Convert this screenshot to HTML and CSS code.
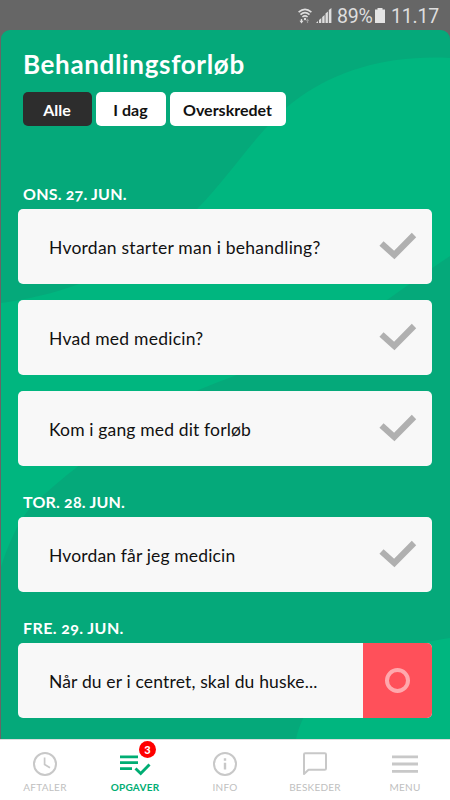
FILE: index.html
```html
<!DOCTYPE html>
<html lang="da">
<head>
    <meta charset="UTF-8">
    <meta name="viewport" content="width=device-width, initial-scale=1.0">
    <title>Behandlingsforløb</title>
    <link rel="stylesheet" href="styles.css">
</head>
<body>
    <!-- Phone status bar -->
    <div class="status-bar">
        <svg class="wifi" width="14" height="16" viewBox="0 0 14 16" fill="none" stroke="#dedede" stroke-width="1.6">
            <path d="M0.6 4.2Q7 -1.6 13.4 4.2M2.5 6.6Q7 2.6 11.5 6.6M4.4 9Q7 6.8 9.6 9"/>
            <circle cx="7" cy="11" r="1.2" fill="#dedede" stroke="none"/>
            <path d="M3.5 11v2.6" stroke-width="1.4"/>
            <path d="M1.5 12.7h4L3.5 15.6z" fill="#dedede" stroke="none"/>
            <path d="M9.5 15v-2.5" stroke="#999" stroke-width="1.2"/>
            <path d="M7.8 13h3.4L9.5 10.6z" fill="#999" stroke="none"/>
        </svg>
        <svg class="signal" width="16" height="16" viewBox="0 0 16 16" fill="#dedede">
            <path d="M0 15l2-2v2zM3 12l2.3-2v5H3zM6.2 9l2.4-2v8H6.2zM9.5 5.5l2.4-2V15H9.5zM12.8 2l2.6-2v15h-2.6z"/>
        </svg>
        <span class="percent">89%</span>
        <svg class="battery" width="10" height="15" viewBox="0 0 10 15" fill="#e4e4e4">
            <path d="M0 1.5h2.5V0h5v1.5H10V15H0z"/>
        </svg>
        <span class="clock">11.17</span>
    </div>

    <main class="app">
        <!-- Background waves -->
        <svg class="waves" width="449" height="709" viewBox="1 30 449 709" fill="#00b67f">
            <path d="M450 58C390 55 340 69 300 97C262 123 232 174 198 208C160 249 90 292 0 303V570C7 548 16 525 30 508C60 478 100 449 143 419C190 386 260 371 320 341C370 315 412 281 450 256Z"/>
            <path d="M450 638C405 645 377 656 350 672C322 687 303 709 296 739H450Z"/>
        </svg>

        <h1>Behandlingsforløb</h1>
        <div class="filters">
            <button class="filter all active">Alle</button>
            <button class="filter today">I dag</button>
            <button class="filter overdue">Overskredet</button>
        </div>

        <section class="day">
            <h2>ONS. 27. JUN.</h2>
            <div class="task">
                <span class="wide">Hvordan starter man i behandling?</span>
                <svg class="check" width="38" height="28" viewBox="0 0 38 28" fill="none" stroke="#b0b0b0" stroke-width="6.2"><path d="M2.5 11.5L15.3 23L35 3"/></svg>
            </div>
            <div class="task">
                <span class="wide">Hvad med medicin?</span>
                <svg class="check" width="38" height="28" viewBox="0 0 38 28" fill="none" stroke="#b0b0b0" stroke-width="6.2"><path d="M2.5 11.5L15.3 23L35 3"/></svg>
            </div>
            <div class="task">
                <span>Kom i gang med dit forløb</span>
                <svg class="check" width="38" height="28" viewBox="0 0 38 28" fill="none" stroke="#b0b0b0" stroke-width="6.2"><path d="M2.5 11.5L15.3 23L35 3"/></svg>
            </div>
        </section>

        <section class="day">
            <h2>TOR. 28. JUN.</h2>
            <div class="task">
                <span>Hvordan får jeg medicin</span>
                <svg class="check" width="38" height="28" viewBox="0 0 38 28" fill="none" stroke="#b0b0b0" stroke-width="6.2"><path d="M2.5 11.5L15.3 23L35 3"/></svg>
            </div>
        </section>

        <section class="day">
            <h2 class="wide">FRE. 29. JUN.</h2>
            <div class="task open">
                <span>Når du er i centret, skal du huske...</span>
                <div class="missing"><div class="ring"></div></div>
            </div>
        </section>
    </main>

    <!-- Bottom navigation -->
    <nav class="tabs">
        <a class="tab">
            <svg width="26" height="26" viewBox="0 0 26 26" fill="none" stroke="#c8c8c8" stroke-width="2"><circle cx="13" cy="13" r="11"/><path d="M12.6 6.5V13.5L18 16.8" stroke-width="1.7"/></svg>
            <span>AFTALER</span>
        </a>
        <a class="tab selected">
            <svg width="32" height="26" viewBox="0 0 32 26" fill="none" stroke="#00ad73"><path d="M1 5.8h18M1 11.7h18M1 17.6h12" stroke-width="2.7"/><path d="M16.5 17.5L21.7 22.5L30.5 13.5" stroke-width="2.9"/></svg>
            <span>OPGAVER</span>
            <b class="badge">3</b>
        </a>
        <a class="tab">
            <svg width="26" height="26" viewBox="0 0 26 26" fill="none" stroke="#c8c8c8" stroke-width="2"><circle cx="13" cy="13" r="11"/><path d="M13 11.8V18.5M13 7.2V9.7" stroke-width="2.4"/></svg>
            <span>INFO</span>
        </a>
        <a class="tab">
            <svg width="26" height="26" viewBox="0 0 26 26" fill="none" stroke="#c8c8c8" stroke-width="2" stroke-linejoin="round"><path d="M2 23V3.5Q2 2.3 3.2 2.3H22.8Q24 2.3 24 3.5V17.5Q24 18.7 22.8 18.7H6.5Z"/></svg>
            <span>BESKEDER</span>
        </a>
        <a class="tab">
            <svg width="26" height="26" viewBox="0 0 26 26" fill="none" stroke="#c8c8c8" stroke-width="2.8"><path d="M0 5.8h26M0 13h26M0 20.4h26"/></svg>
            <span>MENU</span>
        </a>
    </nav>
</body>
</html>
```
FILE: styles.css
```css
* {
    box-sizing: border-box;
}

body {
    width: 450px;
    height: 800px;
    margin: 0;
    overflow: hidden;
    background-color: #666;
    font-family: Lato, "Noto Sans", sans-serif;
}

.status-bar {
    display: flex;
    height: 30px;
    padding: 8px 12px 0 0;
    justify-content: flex-end;
    align-items: flex-start;
    color: #dedede;
    font: 19.5px/17px Roboto, sans-serif;
    letter-spacing: -0.2px;
    white-space: nowrap;
}

.wifi {
    margin-right: 4px;
}

.signal {
    margin-right: 5px;
}

.percent {
    width: 38px;
}

.battery {
    margin-right: 6px;
}

.clock {
    width: 47px;
}

.app {
    position: relative;
    height: 709px;
    margin-left: 1px;
    padding: 17px 18px 0 17px;
    border-radius: 9px 9px 0 0;
    background-color: #05a97a;
    overflow: hidden;
}

.waves {
    position: absolute;
    top: 0;
    left: 0;
}

h1,
.filters,
.day {
    position: relative;
}

h1 {
    margin: 0 0 10px 5px;
    color: #fff;
    font-size: 26px;
    line-height: 35px;
    font-weight: 700;
    letter-spacing: 0.65px;
}

.filters {
    display: flex;
    gap: 4px;
    margin-left: 5px;
    margin-bottom: 57px;
}

.filter {
    height: 34px;
    padding: 0 1px 0 0;
    border: none;
    border-radius: 5px;
    background-color: #fff;
    color: #111;
    font-family: inherit;
    font-size: 16px;
    font-weight: 700;
}

.all {
    width: 69px;
}

.today {
    width: 70px;
}

.overdue {
    width: 116px;
}

.filter.active {
    background-color: #2d2d2d;
    color: #fff;
}

.day {
    margin-bottom: 25px;
}

h2 {
    margin: 0 0 5px 5px;
    color: #fff;
    font-size: 16px;
    line-height: 21px;
    font-weight: 700;
    font-variant-numeric: oldstyle-nums;
    letter-spacing: 0.2px;
}

h2.wide {
    letter-spacing: 0.4px;
}

.task {
    display: flex;
    height: 75px;
    margin-bottom: 16px;
    padding: 0 15px 0 31px;
    align-items: center;
    justify-content: space-between;
    border-radius: 5px;
    background-color: #f8f8f8;
    color: #111;
    font-size: 17.5px;
    letter-spacing: 0.15px;
    white-space: nowrap;
    overflow: hidden;
}

.task:last-child {
    margin-bottom: 0;
}

.task span {
    padding-top: 2px;
}

.task .wide {
    letter-spacing: 0.24px;
}

.check {
    margin-bottom: 2px;
}

.task.open {
    padding-right: 0;
}

.missing {
    display: flex;
    width: 69px;
    height: 75px;
    align-items: center;
    justify-content: center;
    background-color: #ff505a;
}

.ring {
    width: 25px;
    height: 25px;
    border: 4.5px solid #ffa8ad;
    border-radius: 50%;
}

.tabs {
    display: flex;
    height: 61px;
    padding-top: 11px;
    border-top: 1px solid #ddd;
    background-color: #fff;
}

.tab {
    position: relative;
    display: flex;
    width: 90px;
    flex-direction: column;
    align-items: center;
    color: #c0c0c0;
    font-size: 10px;
    line-height: 12px;
    letter-spacing: 0.25px;
}

.tab span {
    margin-top: 4px;
}

.tab.selected {
    color: #00ad73;
    font-weight: 700;
}

.badge {
    position: absolute;
    top: -10px;
    left: 49px;
    width: 17px;
    height: 17px;
    border-radius: 50%;
    background-color: #f00;
    color: #fff;
    font-size: 11px;
    line-height: 17px;
    text-align: center;
}
```
